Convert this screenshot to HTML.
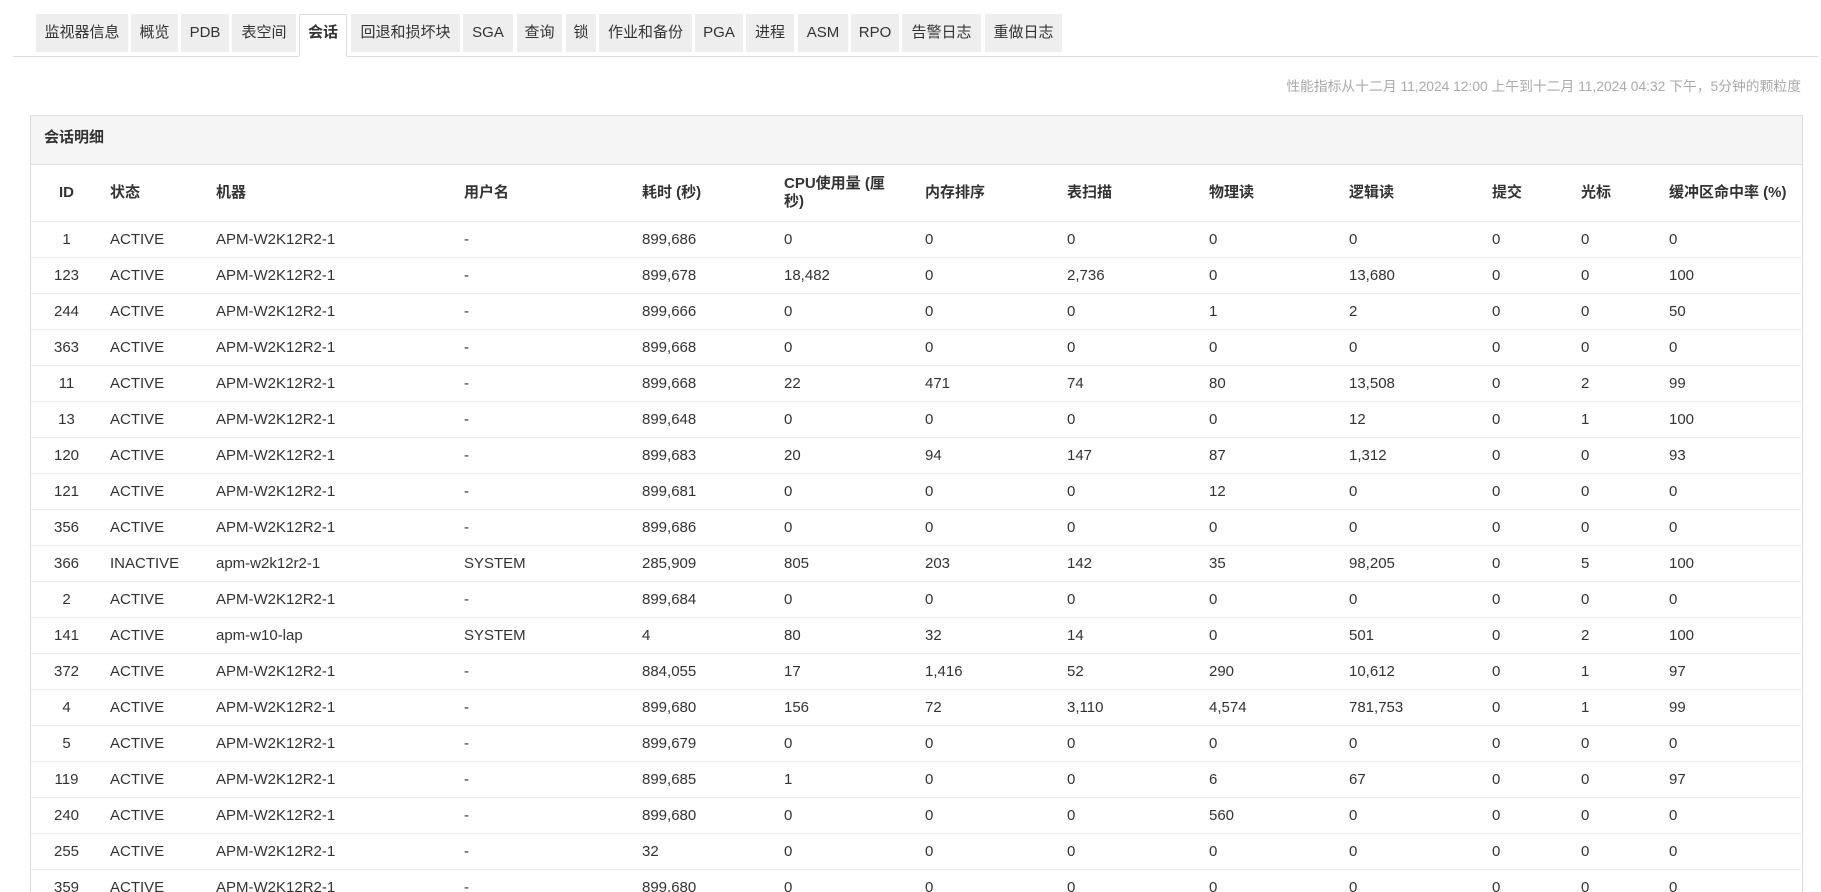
<!DOCTYPE html>
<html><head><meta charset="utf-8"><style>
*{box-sizing:border-box;margin:0;padding:0}
html,body{width:1821px;height:892px;overflow:hidden}
body{background:#fff;font-family:"Liberation Sans","Noto Sans CJK SC",sans-serif;color:#333;position:relative}
.tabs{position:absolute;left:13px;top:14px;width:1805px;height:43px;border-bottom:1px solid #ddd}
.tabs span{position:absolute;top:0;height:38px;line-height:38px;background:#eee;font-size:15px;color:#333;text-align:center}
.tabs span.act{background:#fff;border:1px solid #ddd;border-bottom:1px solid #fff;height:43px;font-weight:bold;line-height:36px}
.info{position:absolute;right:20px;top:75px;font-size:13.8px;color:#aaa}
.panel{position:absolute;left:30px;top:115px;width:1773px;height:820px;border:1px solid #ddd}
.ph{height:49px;background:#f5f5f5;border-bottom:1px solid #ddd;font-weight:bold;font-size:15px;padding-left:13px;line-height:43px}
table{border-collapse:collapse;table-layout:fixed;font-size:15px}
th{text-align:left;vertical-align:middle;height:56px;padding:0 8px;line-height:18px;font-weight:bold}
td{height:36px;padding:0 8px;border-top:1px solid #eee;vertical-align:middle}
td:first-child,th:first-child{text-align:center}
</style></head><body>
<div class="tabs">
<span style="left:23px;width:92px">监视器信息</span>
<span style="left:118px;width:47px">概览</span>
<span style="left:168px;width:48px">PDB</span>
<span style="left:219px;width:64px">表空间</span>
<span class="act" style="left:286px;width:48px">会话</span>
<span style="left:338px;width:109px">回退和损坏块</span>
<span style="left:450px;width:50px">SGA</span>
<span style="left:504px;width:45px">查询</span>
<span style="left:553px;width:30px">锁</span>
<span style="left:586px;width:93px">作业和备份</span>
<span style="left:682px;width:48px">PGA</span>
<span style="left:733px;width:48px">进程</span>
<span style="left:785px;width:50px">ASM</span>
<span style="left:838px;width:48px">RPO</span>
<span style="left:889px;width:79px">告警日志</span>
<span style="left:972px;width:77px">重做日志</span>
</div>
<div class="info">性能指标从十二月 11,2024 12:00 上午到十二月 11,2024 04:32 下午，5分钟的颗粒度</div>
<div class="panel">
<div class="ph">会话明细</div>
<table>
<colgroup><col style="width:71px"><col style="width:106px"><col style="width:248px"><col style="width:178px"><col style="width:142px"><col style="width:141px"><col style="width:142px"><col style="width:142px"><col style="width:140px"><col style="width:143px"><col style="width:89px"><col style="width:88px"><col style="width:140px"></colgroup>
<tr><th>ID</th><th>状态</th><th>机器</th><th>用户名</th><th>耗时 (秒)</th><th>CPU使用量 (厘<br>秒)</th><th>内存排序</th><th>表扫描</th><th>物理读</th><th>逻辑读</th><th>提交</th><th>光标</th><th>缓冲区命中率 (%)</th></tr>
<tr><td>1</td><td>ACTIVE</td><td>APM-W2K12R2-1</td><td>-</td><td>899,686</td><td>0</td><td>0</td><td>0</td><td>0</td><td>0</td><td>0</td><td>0</td><td>0</td></tr>
<tr><td>123</td><td>ACTIVE</td><td>APM-W2K12R2-1</td><td>-</td><td>899,678</td><td>18,482</td><td>0</td><td>2,736</td><td>0</td><td>13,680</td><td>0</td><td>0</td><td>100</td></tr>
<tr><td>244</td><td>ACTIVE</td><td>APM-W2K12R2-1</td><td>-</td><td>899,666</td><td>0</td><td>0</td><td>0</td><td>1</td><td>2</td><td>0</td><td>0</td><td>50</td></tr>
<tr><td>363</td><td>ACTIVE</td><td>APM-W2K12R2-1</td><td>-</td><td>899,668</td><td>0</td><td>0</td><td>0</td><td>0</td><td>0</td><td>0</td><td>0</td><td>0</td></tr>
<tr><td>11</td><td>ACTIVE</td><td>APM-W2K12R2-1</td><td>-</td><td>899,668</td><td>22</td><td>471</td><td>74</td><td>80</td><td>13,508</td><td>0</td><td>2</td><td>99</td></tr>
<tr><td>13</td><td>ACTIVE</td><td>APM-W2K12R2-1</td><td>-</td><td>899,648</td><td>0</td><td>0</td><td>0</td><td>0</td><td>12</td><td>0</td><td>1</td><td>100</td></tr>
<tr><td>120</td><td>ACTIVE</td><td>APM-W2K12R2-1</td><td>-</td><td>899,683</td><td>20</td><td>94</td><td>147</td><td>87</td><td>1,312</td><td>0</td><td>0</td><td>93</td></tr>
<tr><td>121</td><td>ACTIVE</td><td>APM-W2K12R2-1</td><td>-</td><td>899,681</td><td>0</td><td>0</td><td>0</td><td>12</td><td>0</td><td>0</td><td>0</td><td>0</td></tr>
<tr><td>356</td><td>ACTIVE</td><td>APM-W2K12R2-1</td><td>-</td><td>899,686</td><td>0</td><td>0</td><td>0</td><td>0</td><td>0</td><td>0</td><td>0</td><td>0</td></tr>
<tr><td>366</td><td>INACTIVE</td><td>apm-w2k12r2-1</td><td>SYSTEM</td><td>285,909</td><td>805</td><td>203</td><td>142</td><td>35</td><td>98,205</td><td>0</td><td>5</td><td>100</td></tr>
<tr><td>2</td><td>ACTIVE</td><td>APM-W2K12R2-1</td><td>-</td><td>899,684</td><td>0</td><td>0</td><td>0</td><td>0</td><td>0</td><td>0</td><td>0</td><td>0</td></tr>
<tr><td>141</td><td>ACTIVE</td><td>apm-w10-lap</td><td>SYSTEM</td><td>4</td><td>80</td><td>32</td><td>14</td><td>0</td><td>501</td><td>0</td><td>2</td><td>100</td></tr>
<tr><td>372</td><td>ACTIVE</td><td>APM-W2K12R2-1</td><td>-</td><td>884,055</td><td>17</td><td>1,416</td><td>52</td><td>290</td><td>10,612</td><td>0</td><td>1</td><td>97</td></tr>
<tr><td>4</td><td>ACTIVE</td><td>APM-W2K12R2-1</td><td>-</td><td>899,680</td><td>156</td><td>72</td><td>3,110</td><td>4,574</td><td>781,753</td><td>0</td><td>1</td><td>99</td></tr>
<tr><td>5</td><td>ACTIVE</td><td>APM-W2K12R2-1</td><td>-</td><td>899,679</td><td>0</td><td>0</td><td>0</td><td>0</td><td>0</td><td>0</td><td>0</td><td>0</td></tr>
<tr><td>119</td><td>ACTIVE</td><td>APM-W2K12R2-1</td><td>-</td><td>899,685</td><td>1</td><td>0</td><td>0</td><td>6</td><td>67</td><td>0</td><td>0</td><td>97</td></tr>
<tr><td>240</td><td>ACTIVE</td><td>APM-W2K12R2-1</td><td>-</td><td>899,680</td><td>0</td><td>0</td><td>0</td><td>560</td><td>0</td><td>0</td><td>0</td><td>0</td></tr>
<tr><td>255</td><td>ACTIVE</td><td>APM-W2K12R2-1</td><td>-</td><td>32</td><td>0</td><td>0</td><td>0</td><td>0</td><td>0</td><td>0</td><td>0</td><td>0</td></tr>
<tr><td>359</td><td>ACTIVE</td><td>APM-W2K12R2-1</td><td>-</td><td>899,680</td><td>0</td><td>0</td><td>0</td><td>0</td><td>0</td><td>0</td><td>0</td><td>0</td></tr>
</table>
</div>
</body></html>
